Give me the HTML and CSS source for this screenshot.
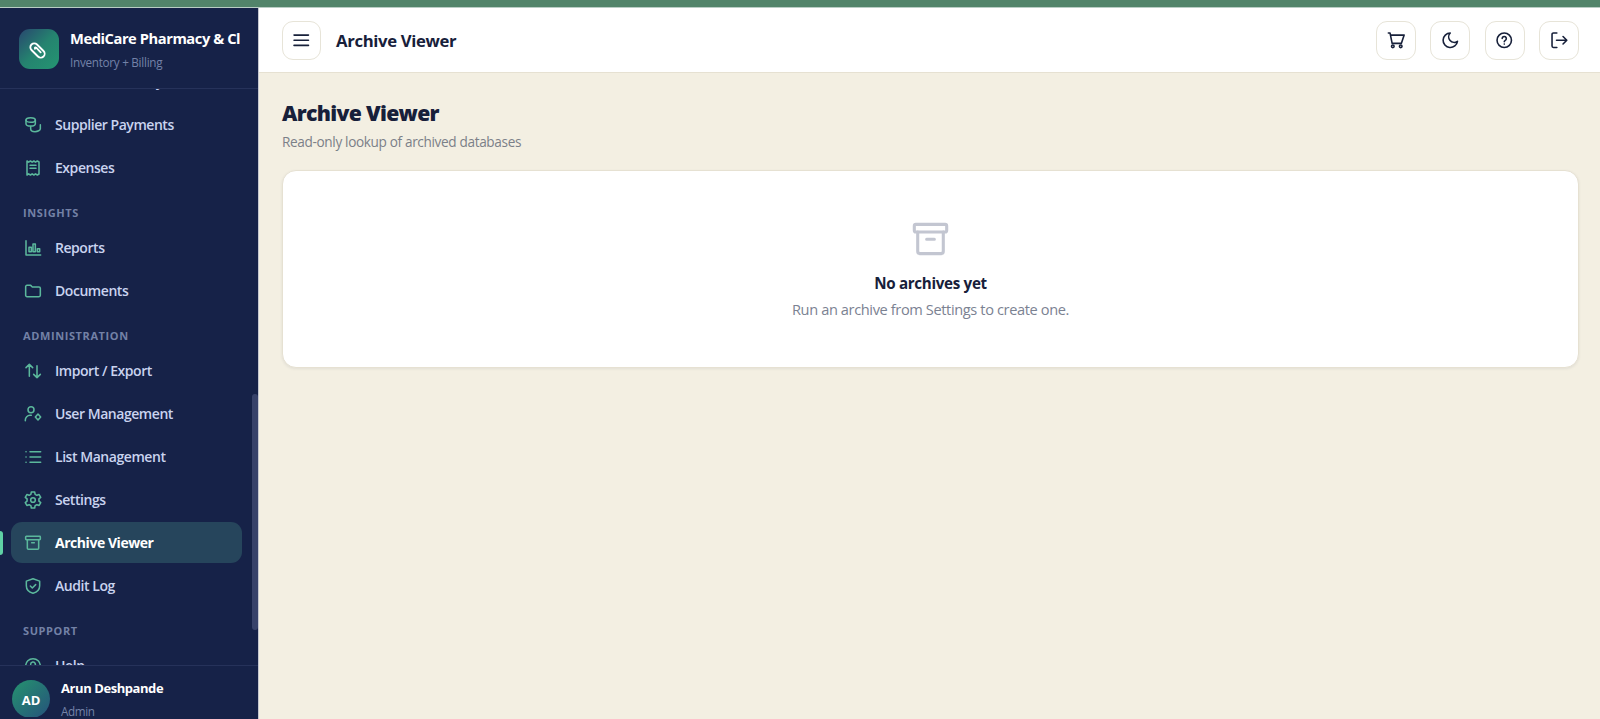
FILE: index.html
```html
<!DOCTYPE html>
<html lang="en">
<head>
  <meta charset="UTF-8">
  <title>Archive Viewer</title>
  <link rel="stylesheet" href="styles.css">
</head>
<body>
  <div class="strip"></div>
  <div class="app">
    <aside class="sidebar">
      <div class="brand">
        <div class="brand-logo">
          <svg viewBox="0 0 24 24"><rect x="0" y="6.500" width="24" height="11" rx="5.500" transform="rotate(45 12 12)"/><path d="M8.500 9.500c-.8-1.500.5-2.500 1.700-1.500l6.300 6.500"/></svg>
        </div>
        <div class="brand-text">
          <div class="brand-name">MediCare Pharmacy &amp; Clinic</div>
          <div class="brand-sub">Inventory + Billing</div>
        </div>
      </div>

      <nav class="nav">
        <div class="nav-list">
          <a class="nav-item"><svg viewBox="0 0 24 24"></svg><span>Purchase History</span></a>
          <a class="nav-item"><svg viewBox="0 0 24 24"><ellipse cx="8.500" cy="4.500" rx="7" ry="3.500"/><path d="M1.500 4.500v5.500c0 2 3 3.500 7 3.500s7-1.500 7-3.500V4.500M8.500 13.500v4c0 2.500 2.500 4.500 6.500 4.500s8-2 8-4.500v-6"/></svg><span>Supplier Payments</span></a>
          <a class="nav-item"><svg viewBox="0 0 24 24"><path d="M3 1.500l2.500 1.700L8.200 1.500l2.500 1.700L13.300 1.500l2.500 1.700L18.500 1.500 21 3v18l-2.500 1.500-2.700-1.700-2.500 1.700-2.600-1.700-2.500 1.700-2.700-1.700L3 22.500zM7.500 8h9M7.500 12.500h9"/></svg><span>Expenses</span></a>

          <div class="nav-label">Insights</div>
          <a class="nav-item"><svg viewBox="0 0 24 24"><path d="M1.500 1v21.500H23.500M6 11h3.500v6.500H6zM12 6h3.500v11.500H12zM18.500 13H22v4.500h-3.500z"/></svg><span>Reports</span></a>
          <a class="nav-item"><svg viewBox="0 0 24 24"><path d="M1 5.500a2 2 0 0 1 2-2h5.500L11 6H21a2 2 0 0 1 2 2V18.500a2 2 0 0 1-2 2H3a2 2 0 0 1-2-2z"/></svg><span>Documents</span></a>

          <div class="nav-label">Administration</div>
          <a class="nav-item"><svg viewBox="0 0 24 24"><path d="M6.500 20V2M1.500 7l5-5 5 5M18 4v18M13 17l5 5 5-5"/></svg><span>Import / Export</span></a>
          <a class="nav-item"><svg viewBox="0 0 24 24"><circle cx="9" cy="5.500" r="4.500"/><path d="M0.500 22v-1a7 7 0 0 1 7-7H9.500M19.500 12l4 4.500-4 4.500-4-4.500z"/></svg><span>User Management</span></a>
          <a class="nav-item"><svg viewBox="0 0 24 24"><path d="M7.500 4H23.500M7.500 12H23.500M7.500 20H23.500M1.500 4h.1M1.500 12h.1M1.500 20h.1"/></svg><span>List Management</span></a>
          <a class="nav-item"><svg viewBox="0 0 24 24"><circle cx="12" cy="12" r="3.500"/><path d="M9.500 0h5l.7 3.500 2.600 1.500 3.400-1.200 2.400 4.200-2.700 2.300v3.400l2.700 2.300-2.400 4.200-3.400-1.200-2.600 1.500-.7 3.500h-5l-.7-3.500-2.600-1.500-3.400 1.200L.4 16l2.700-2.300v-3.400L.4 8l2.400-4.200L6.200 5l2.600-1.500z"/></svg><span>Settings</span></a>
          <a class="nav-item active"><svg viewBox="0 0 24 24"><rect x="1" y="2" width="22" height="5" rx="1"/><path d="M3.500 7v13A1.500 1.500 0 0 0 5 21.500h14a1.500 1.500 0 0 0 1.500-1.500V7M10 11.500h4"/></svg><span>Archive Viewer</span></a>
          <a class="nav-item"><svg viewBox="0 0 24 24"><path d="M12 1l10 3.700v6.800c0 5.500-3.700 9.500-10 11.500-6.300-2-10-6-10-11.500V4.700zM8 12l3 3 5-5"/></svg><span>Audit Log</span></a>

          <div class="nav-label">Support</div>
          <a class="nav-item"><svg viewBox="0 0 24 24"><circle cx="12" cy="12" r="11"/><path d="M8.500 9.500a3.500 3.500 0 1 1 5.200 3c-1.200.7-1.700 1.200-1.700 2.300M12 18v.1"/></svg><span>Help</span></a>
        </div>
        <div class="nav-scroll"></div>
      </nav>

      <div class="user">
        <div class="avatar">AD</div>
        <div class="user-text">
          <div class="user-name">Arun Deshpande</div>
          <div class="user-role">Admin</div>
        </div>
      </div>
    </aside>

    <main class="main">
      <header class="topbar">
        <button class="icon-btn menu-btn"><svg viewBox="0 0 24 24"><path d="M1.500 4.500h21M1.500 12h21M1.500 19.500h21"/></svg></button>
        <div class="topbar-title">Archive Viewer</div>
        <div class="topbar-actions">
          <button class="icon-btn"><svg viewBox="0 0 24 24"><path d="M0.500 1.500h2.500L6 16.500h13.500L23.500 4.500H3.700"/><circle cx="7" cy="20.800" r="1.900"/><circle cx="18.500" cy="20.800" r="1.900"/></svg></button>
          <button class="icon-btn"><svg viewBox="0 0 24 24"><path d="M12 1.500a10.500 10.500 0 1 0 10.500 12A8 8 0 0 1 12 1.500z"/></svg></button>
          <button class="icon-btn"><svg viewBox="0 0 24 24"><circle cx="12" cy="12" r="10.500"/><path d="M9 9.500a3 3 0 1 1 4.500 2.600c-1 .6-1.500 1.100-1.500 2.200M12 17.500v.1"/></svg></button>
          <button class="icon-btn"><svg viewBox="0 0 24 24"><path d="M8.500 1.500H3.500A2 2 0 0 0 1.500 3.500v17A2 2 0 0 0 3.500 22.500H8.500M8 12h15M17.500 6.500L23 12l-5.500 5.500"/></svg></button>
        </div>
      </header>

      <section class="content">
        <h1>Archive Viewer</h1>
        <p class="subtitle">Read-only lookup of archived databases</p>
        <div class="card">
          <svg class="empty-icon" viewBox="0 0 24 24"><rect x="1.500" y="2.500" width="21" height="5" rx="1"/><path d="M3.700 7.500v12.500A1.500 1.500 0 0 0 5.200 21.500h13.600a1.500 1.500 0 0 0 1.500-1.500V7.500M9.500 12.200h5"/></svg>
          <div class="empty-title">No archives yet</div>
          <div class="empty-text">Run an archive from Settings to create one.</div>
        </div>
      </section>
    </main>
  </div>
</body>
</html>
```
FILE: styles.css
```css
* { box-sizing: border-box; }
body {
  margin: 0; height: 719px; overflow: hidden; background: #f3efe2; color: #17203a;
  font-family: "Open Sans", "Noto Sans", sans-serif;
}
svg { fill: none; stroke: currentColor; stroke-width: 2.3; stroke-linecap: round; stroke-linejoin: round; flex: none; overflow: visible; }

.strip { height: 8px; background: #52846a; border-bottom: 1px solid #b9cdc4; }
.app { display: flex; height: 711px; }

/* sidebar */
.sidebar {
  width: 259px; flex: none; display: flex; flex-direction: column;
  background: #162248; border-right: 1px solid #c5c7cf; padding-bottom: 2px;
}
.brand {
  height: 81px; flex: none; display: flex; align-items: center; gap: 11px;
  padding: 1px 18px 0 19px; border-bottom: 1px solid #26325a;
}
.brand-logo {
  width: 40px; height: 40px; flex: none; border-radius: 11px; color: #fff;
  display: flex; align-items: center; justify-content: center;
  background: linear-gradient(135deg, #28476f, #25836f 50%, #249572);
}
.brand-logo svg { width: 17px; height: 17px; stroke-width: 2.6; margin-top: 3px; margin-right: 4px; }
.brand-text { overflow: hidden; padding-top: 1px; }
.brand-name { color: #fff; font-size: 14.7px; font-weight: 700; line-height: 24px; white-space: nowrap; overflow: hidden; letter-spacing: -0.44px; }
.brand-sub { color: #7482a8; font-size: 11.7px; line-height: 22px; letter-spacing: -0.27px; padding-top: 1px; }

.nav { flex: 1; min-height: 0; overflow: hidden; position: relative; }
.nav-list { display: flex; flex-direction: column; gap: 2px; margin-top: -28px; padding: 0 16px 0 11px; }
.nav-item {
  height: 41px; flex: none; display: flex; align-items: center; gap: 14px; padding-left: 14px;
  border-radius: 11px; color: #c9d3ef; font-size: 14px; font-weight: 600; letter-spacing: -0.45px; position: relative;
}
.nav-item svg { width: 16px; height: 16px; color: #5bb89c; }
.nav-item.active { background: #26455c; color: #fff; font-weight: 700; }
.nav-item.active::before {
  content: ""; position: absolute; left: -11px; top: 9px; width: 3px; height: 24px;
  background: #5fd0a5; border-radius: 0 3px 3px 0;
}
.nav-label {
  height: 35px; flex: none; padding: 15px 0 0 12px; line-height: 16px;
  color: #7381a6; font-size: 11px; font-weight: 700; letter-spacing: 0.6px; text-transform: uppercase;
}
.nav-scroll { position: absolute; right: 0; top: 305px; width: 6px; height: 236px; border-radius: 3px; background: #37426a; }

.user {
  height: 52px; flex: none; display: flex; gap: 11px; overflow: hidden;
  padding: 14px 0 0 12px; border-top: 1px solid #26325a;
}
.avatar {
  width: 38px; height: 38px; flex: none; border-radius: 50%; color: #fff;
  font-size: 13px; font-weight: 700; line-height: 40px; text-align: center;
  background: linear-gradient(135deg, #25936f, #26527b);
}
.user-name { color: #fff; font-size: 13px; font-weight: 700; line-height: 16px; letter-spacing: -0.43px; }
.user-role { color: #7482a8; font-size: 11.7px; line-height: 16px; margin-top: 7px; letter-spacing: -0.4px; }

/* header */
.main { flex: 1; min-width: 0; display: flex; flex-direction: column; }
.topbar {
  height: 65px; flex: none; display: flex; align-items: center; gap: 15px;
  background: #fff; border-bottom: 1px solid #e6e1d2; padding: 0 21px 0 23px;
}
.icon-btn {
  width: 40px; height: 39px; padding: 0; background: #fff; color: #17203a;
  border: 1px solid #e7e4d8; border-radius: 11px; display: flex; align-items: center; justify-content: center;
}
.icon-btn svg { width: 16.5px; height: 16.5px; }
.menu-btn { width: 39px; }
.topbar-title { flex: 1; font-size: 16.7px; font-weight: 700; letter-spacing: -0.34px; }
.topbar-actions { display: flex; gap: 14.3px; }

/* page */
.content { padding: 26px 21px 0 23px; }
h1 { margin: 0; font-size: 21.2px; font-weight: 800; line-height: 28px; letter-spacing: -0.68px; }
.subtitle { margin: 5px 0 18px; color: #7b8088; font-size: 13.6px; line-height: 20px; letter-spacing: -0.35px; }
.card {
  height: 198px; background: #fff; border: 1px solid #e6e1d2; border-radius: 14px;
  box-shadow: 0 1px 3px rgba(23, 32, 58, 0.08);
  display: flex; flex-direction: column; align-items: center; padding-top: 49px;
}
.empty-icon { width: 37px; height: 38px; color: #c3c6d1; stroke-width: 2; }
.empty-title { font-size: 15.2px; font-weight: 700; line-height: 22px; margin-top: 14px; letter-spacing: -0.32px; }
.empty-text { font-size: 14.6px; line-height: 22px; color: #7b8292; margin-top: 4px; letter-spacing: -0.38px; }
```
